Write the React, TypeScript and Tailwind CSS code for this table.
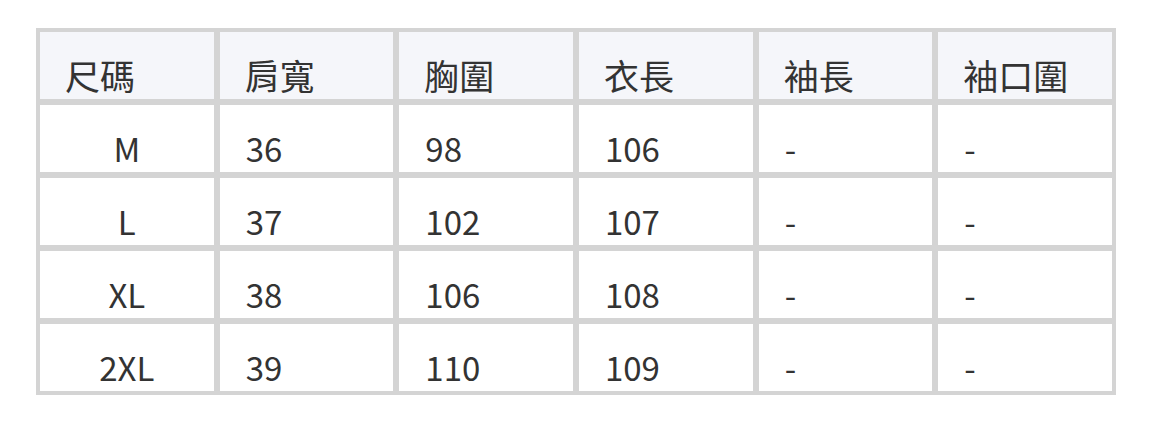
import React from "react";

const headers = ["尺碼", "肩寬", "胸圍", "衣長", "袖長", "袖口圍"];
const rows = [
  ["M", "36", "98", "106", "-", "-"],
  ["L", "37", "102", "107", "-", "-"],
  ["XL", "38", "106", "108", "-", "-"],
  ["2XL", "39", "110", "109", "-", "-"],
];

export default function App() {
  return (
    <div
      className="w-[1152px] h-[422px] bg-white pt-[28px] pl-[36px]"
      style={{ fontFamily: '"Noto Sans CJK TC", "Noto Sans", sans-serif' }}
    >
      <table className="w-[1080px] table-fixed border-separate border-spacing-0 border border-[#d4d4d4] leading-[48px] text-[#333333]">
        <thead>
          <tr>
            {headers.map((h) => (
              <th
                key={h}
                className="border-[3px] border-[#d4d4d4] bg-[#f5f6fa] pt-[19px] pb-0 pl-[25px] text-left text-[35px] leading-[48px] font-normal align-bottom"
              >
                {h}
              </th>
            ))}
          </tr>
        </thead>
        <tbody>
          {rows.map((r) => (
            <tr key={r[0]}>
              {r.map((c, i) => (
                <td
                  key={i}
                  className={
                    i === 0
                      ? "border-[3px] border-[#d4d4d4] pt-[18.5px] pb-[0.5px] text-center text-[33px] leading-[48px] align-bottom"
                      : "border-[3px] border-[#d4d4d4] pt-[18.5px] pb-[0.5px] pl-[26px] text-left text-[33px] leading-[48px] align-bottom"
                  }
                >
                  {c}
                </td>
              ))}
            </tr>
          ))}
        </tbody>
      </table>
    </div>
  );
}
